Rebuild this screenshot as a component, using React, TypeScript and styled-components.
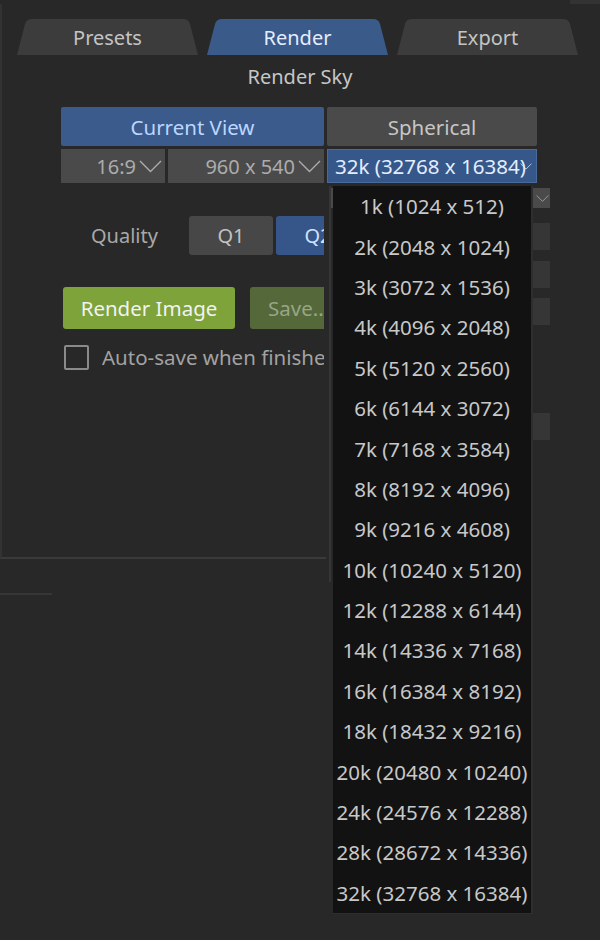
import React from "react";
import styled, { createGlobalStyle, css } from "styled-components";

const Global = createGlobalStyle`
  html, body { margin: 0; padding: 0; background: #282828; }
  * { box-sizing: border-box; }
`;

const Page = styled.div`
  width: 600px;
  height: 940px;
  background: #282828;
  position: relative;
  overflow: hidden;
  font-family: "Noto Sans", "Open Sans", "DejaVu Sans", sans-serif;
  font-size: 19px;
`;

const TopStrip = styled.div`
  height: 4px;
  display: flex;
  justify-content: flex-end;
`;

const TopCorner = styled.div`
  width: 30px;
  background: #333;
`;

const Panel = styled.div`
  height: 555px;
  border-left: 2px solid #323232;
  border-bottom: 2px solid #3a3a3a;
  width: 326px;
  position: relative;
  padding-top: 15px;
`;

const PanelInner = styled.div`
  width: 598px;
`;

const TabBar = styled.div`
  display: flex;
  gap: 9px;
  padding-left: 15px;
`;

const Tab = styled.div<{ $active?: boolean }>`
  width: 181px;
  height: 36px;
  display: flex;
  align-items: center;
  justify-content: center;
  font-size: 20px;
  clip-path: path("M0,36 L8,5 Q9.5,0 15,0 L166,0 Q171.5,0 173,5 L181,36 Z");
  background: ${(p) => (p.$active ? "#3a5a8a" : "#3c3c3c")};
  color: ${(p) => (p.$active ? "#e2eeff" : "#c4c4c4")};
`;

const Title = styled.div`
  text-align: center;
  color: #c6c6c6;
  font-size: 20px;
  line-height: 28px;
  margin-top: 8px;
  padding-right: 2px;
`;

const Controls = styled.div`
  padding-left: 59px;
  margin-top: 16px;
  display: flex;
  flex-direction: column;
  gap: 3px;
`;

const ModeRow = styled.div`
  display: grid;
  grid-template-columns: 263px 210px;
  gap: 3px;
  height: 39px;
`;

const ModeButton = styled.div<{ $active?: boolean }>`
  display: flex;
  align-items: center;
  justify-content: center;
  font-size: 20.5px;
  border-radius: 2px;
  background: ${(p) => (p.$active ? "#3a5b8c" : "#4a4a4a")};
  color: ${(p) => (p.$active ? "#bcd6ff" : "#c6c6c6")};
`;

const SelectRow = styled.div`
  display: grid;
  grid-template-columns: 104px 156px 210px;
  gap: 3px;
  height: 34px;
`;

const Select = styled.div<{ $open?: boolean }>`
  position: relative;
  display: flex;
  align-items: center;
  font-size: 20px;
  white-space: nowrap;
  overflow: hidden;
  ${(p) =>
    p.$open
      ? css`
          background: #36578a;
          color: #e2eeff;
          padding-left: 7px;
          border: 1px solid #4a6a9c;
          font-size: 20.5px;
        `
      : css`
          background: #4a4a4a;
          color: #acacac;
          justify-content: flex-end;
          padding-right: 3px;
          gap: 3px;
        `}
`;

const OpenChevron = styled.span`
  position: absolute;
  right: 4px;
  top: 10px;
  display: flex;
`;

const Body = styled.div`
  display: grid;
  grid-template-columns: 263px 221px;
  gap: 5px;
`;

const LeftColumn = styled.div`
  overflow: hidden;
  padding-top: 30px;
  display: flex;
  flex-direction: column;
`;

const QualityRow = styled.div`
  display: flex;
  align-items: center;
  height: 39px;
`;

const Label = styled.div`
  flex: 0 0 128px;
  color: #a8a8a8;
  font-size: 20px;
  padding-left: 30px;
`;

const QButton = styled.div<{ $active?: boolean }>`
  flex: 0 0 84px;
  height: 39px;
  margin-right: 3px;
  border-radius: 3px;
  display: flex;
  align-items: center;
  justify-content: center;
  font-size: 20px;
  background: ${(p) => (p.$active ? "#36568a" : "#474747")};
  color: ${(p) => (p.$active ? "#cfe2ff" : "#c2c2c2")};
`;

const ActionRow = styled.div`
  display: flex;
  gap: 15px;
  margin-top: 32px;
  padding-left: 2px;
`;

const ActionButton = styled.div<{ $primary?: boolean }>`
  flex: 0 0 ${(p) => (p.$primary ? "172px" : "90px")};
  height: 42px;
  border-radius: 3px;
  display: flex;
  align-items: center;
  justify-content: ${(p) => (p.$primary ? "center" : "flex-start")};
  padding-left: ${(p) => (p.$primary ? "0" : "18px")};
  font-size: 20.5px;
  white-space: nowrap;
  background: ${(p) => (p.$primary ? "#7ea33b" : "#55683a")};
  color: ${(p) => (p.$primary ? "#f2f2f2" : "#97a686")};
`;

const CheckRow = styled.div`
  display: flex;
  align-items: center;
  gap: 13px;
  margin-top: 14px;
  padding-left: 3px;
  white-space: nowrap;
`;

const CheckBox = styled.div`
  flex: 0 0 25px;
  height: 25px;
  border: 2px solid #8a8a8a;
  border-radius: 2px;
`;

const CheckLabel = styled.div`
  color: #a2a2a2;
  font-size: 20.5px;
`;

const RightColumn = styled.div`
  height: 396px;
  border-left: 2px solid #363636;
  display: flex;
  flex-direction: column;
  padding-top: 2px;
`;

const GhostSelect = styled.div`
  height: 20px;
  background: #4a4a4a;
  display: flex;
  justify-content: flex-end;
  align-items: center;
  padding-right: 1px;
`;

const GhostBar = styled.div<{ $gap: number }>`
  height: 27px;
  margin-top: ${(p) => p.$gap}px;
  background: #363636;
  margin-left: 200px;
`;

const Menu = styled.div`
  position: absolute;
  left: 333px;
  top: 186px;
  width: 198px;
  background: #121212;
  border-bottom: 1px solid #2a2a44;
  box-shadow: 2px 0 0 #2e2e2e;
  display: flex;
  flex-direction: column;
`;

const MenuItem = styled.div`
  height: 40.4px;
  display: flex;
  align-items: center;
  justify-content: center;
  color: #c8c8c8;
  font-size: 20.5px;
  white-space: nowrap;
`;

const BottomRule = styled.div`
  width: 52px;
  height: 2px;
  background: #363636;
  margin-top: 34px;
`;

const Chevron = ({ color = "#acacac", w = 23 }: { color?: string; w?: number }) => (
  <svg width={w} height="13" viewBox="0 0 23 13">
    <polyline points="1,1 11.5,11.5 22,1" fill="none" stroke={color} strokeWidth="1.4" />
  </svg>
);

const sizes = [
  "1k (1024 x 512)",
  "2k (2048 x 1024)",
  "3k (3072 x 1536)",
  "4k (4096 x 2048)",
  "5k (5120 x 2560)",
  "6k (6144 x 3072)",
  "7k (7168 x 3584)",
  "8k (8192 x 4096)",
  "9k (9216 x 4608)",
  "10k (10240 x 5120)",
  "12k (12288 x 6144)",
  "14k (14336 x 7168)",
  "16k (16384 x 8192)",
  "18k (18432 x 9216)",
  "20k (20480 x 10240)",
  "24k (24576 x 12288)",
  "28k (28672 x 14336)",
  "32k (32768 x 16384)",
];

export default function App() {
  return (
    <Page>
      <Global />
      <TopStrip>
        <TopCorner />
      </TopStrip>
      <Panel>
        <PanelInner>
          <TabBar>
            <Tab>Presets</Tab>
            <Tab $active>Render</Tab>
            <Tab>Export</Tab>
          </TabBar>
          <Title>Render Sky</Title>
          <Controls>
            <ModeRow>
              <ModeButton $active>Current View</ModeButton>
              <ModeButton>Spherical</ModeButton>
            </ModeRow>
            <SelectRow>
              <Select>
                16:9 <Chevron />
              </Select>
              <Select>
                960 x 540 <Chevron />
              </Select>
              <Select $open>
                32k (32768 x 16384)
                <OpenChevron>
                  <Chevron color="#e2eeff" w={12} />
                </OpenChevron>
              </Select>
            </SelectRow>
            <Body>
              <LeftColumn>
                <QualityRow>
                  <Label>Quality</Label>
                  <QButton>Q1</QButton>
                  <QButton $active>Q2</QButton>
                </QualityRow>
                <ActionRow>
                  <ActionButton $primary>Render Image</ActionButton>
                  <ActionButton>Save..</ActionButton>
                </ActionRow>
                <CheckRow>
                  <CheckBox />
                  <CheckLabel>Auto-save when finished</CheckLabel>
                </CheckRow>
              </LeftColumn>
              <RightColumn>
                <GhostSelect>
                  <Chevron w={13} />
                </GhostSelect>
                <GhostBar $gap={15} />
                <GhostBar $gap={11} />
                <GhostBar $gap={10} />
                <GhostBar $gap={88} />
              </RightColumn>
            </Body>
          </Controls>
        </PanelInner>
      </Panel>
      <BottomRule />
      <Menu>
        {sizes.map((s) => (
          <MenuItem key={s}>{s}</MenuItem>
        ))}
      </Menu>
    </Page>
  );
}
